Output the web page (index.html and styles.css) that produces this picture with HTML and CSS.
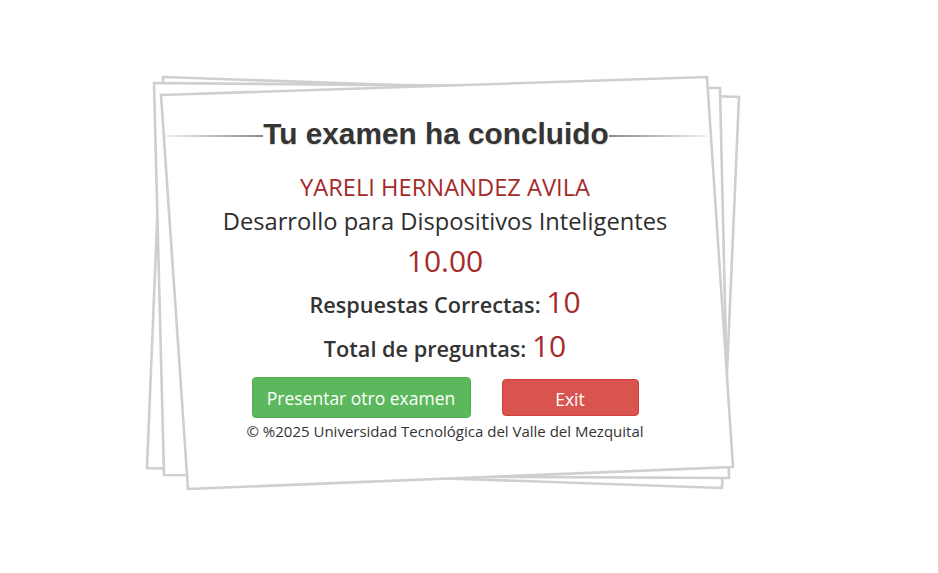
FILE: index.html
```html
<!DOCTYPE html>
<html lang="es">
<head>
<meta charset="utf-8">
<title>Tu examen ha concluido</title>
<link rel="stylesheet" href="styles.css">
</head>
<body>
<div class="card">
  <svg class="sheets" width="938" height="573" viewBox="0 0 938 573" aria-hidden="true">
    <polygon points="163,77 739,97 722,488 147,468" />
    <polygon points="154,83 720,88 729,478 164,475" />
    <polygon points="161,95 707,77 733,467 188,489" />
  </svg>
  <div class="title-row">
    <span class="rule rule-left"></span>
    <h1 class="title">Tu examen ha concluido</h1>
    <span class="rule rule-right"></span>
  </div>
  <div class="body">
    <div class="name">YARELI HERNANDEZ AVILA</div>
    <div class="subject">Desarrollo para Dispositivos Inteligentes</div>
    <div class="grade">10.00</div>
    <div class="stat">Respuestas Correctas: <span class="num">10</span></div>
    <div class="stat stat-total">Total de preguntas: <span class="num">10</span></div>
    <div class="actions">
      <button class="btn btn-green">Presentar otro examen</button>
      <button class="btn btn-red">Exit</button>
    </div>
    <div class="copy">© %2025 Universidad Tecnológica del Valle del Mezquital</div>
  </div>
</div>
</body>
</html>
```
FILE: styles.css
```css
html, body {
  margin: 0;
  padding: 0;
  background: #fff;
}
body {
  width: 938px;
  height: 573px;
  overflow: hidden;
  font-family: "Open Sans", "DejaVu Sans", sans-serif;
  color: #333;
}
.card {
  position: relative;
  width: 542px;
  margin: 116px 0 0 165px;
}
.sheets {
  position: absolute;
  left: -165px;
  top: -116px;
  z-index: 0;
}
.sheets polygon {
  fill: #fff;
  stroke: #cfcfcf;
  stroke-width: 2.6;
  stroke-linejoin: miter;
}
.title-row, .body {
  position: relative;
  z-index: 1;
}
.title-row {
  display: flex;
  align-items: center;
  height: 36px;
}
.title {
  margin: 0;
  font-family: "Liberation Sans", Arial, sans-serif;
  font-weight: bold;
  font-size: 29.8px;
  line-height: 36px;
  color: #353535;
  white-space: nowrap;
  text-shadow: 0 1px 1px rgba(0,0,0,0.15);
}
.rule {
  flex: 1;
  height: 2px;
  margin-top: 4px;
}
.rule-left {
  background: linear-gradient(to right, #f0f0f0, #8a8a8a);
}
.rule-right {
  background: linear-gradient(to left, #f0f0f0, #8a8a8a);
}
.body {
  padding-left: 18px;
  display: flex;
  flex-direction: column;
  align-items: center;
  text-align: center;
}
.name {
  margin-top: 19px;
  font-size: 23.7px;
  line-height: 32px;
  color: #a52a2a;
}
.subject {
  margin-top: 2px;
  font-size: 23.7px;
  line-height: 32px;
  color: #2e2e2e;
}
.grade {
  margin-top: 5px;
  font-size: 30px;
  line-height: 38px;
  color: #a52a2a;
}
.stat {
  margin-top: 2px;
  font-size: 21.7px;
  font-weight: 600;
  line-height: 40px;
  color: #333;
}
.stat-total {
  margin-top: 1px;
}
.num {
  font-size: 30px;
  font-weight: 400;
  color: #a52a2a;
}
.actions {
  display: flex;
  align-items: center;
  gap: 31px;
  margin-top: 8px;
}
.btn {
  border-radius: 4px;
  font-family: "Open Sans", "DejaVu Sans", sans-serif;
  font-size: 17.5px;
  color: #fff;
  cursor: pointer;
  padding: 0;
}
.btn-green {
  width: 219px;
  height: 41px;
  background: #5cb85c;
  border: 1px solid #4cae4c;
}
.btn-red {
  width: 137px;
  height: 37px;
  background: #d9534f;
  border: 1px solid #d43f3a;
  padding-top: 3px;
}
.copy {
  margin-top: 3px;
  font-size: 15px;
  line-height: 20px;
  color: #333;
}
```
